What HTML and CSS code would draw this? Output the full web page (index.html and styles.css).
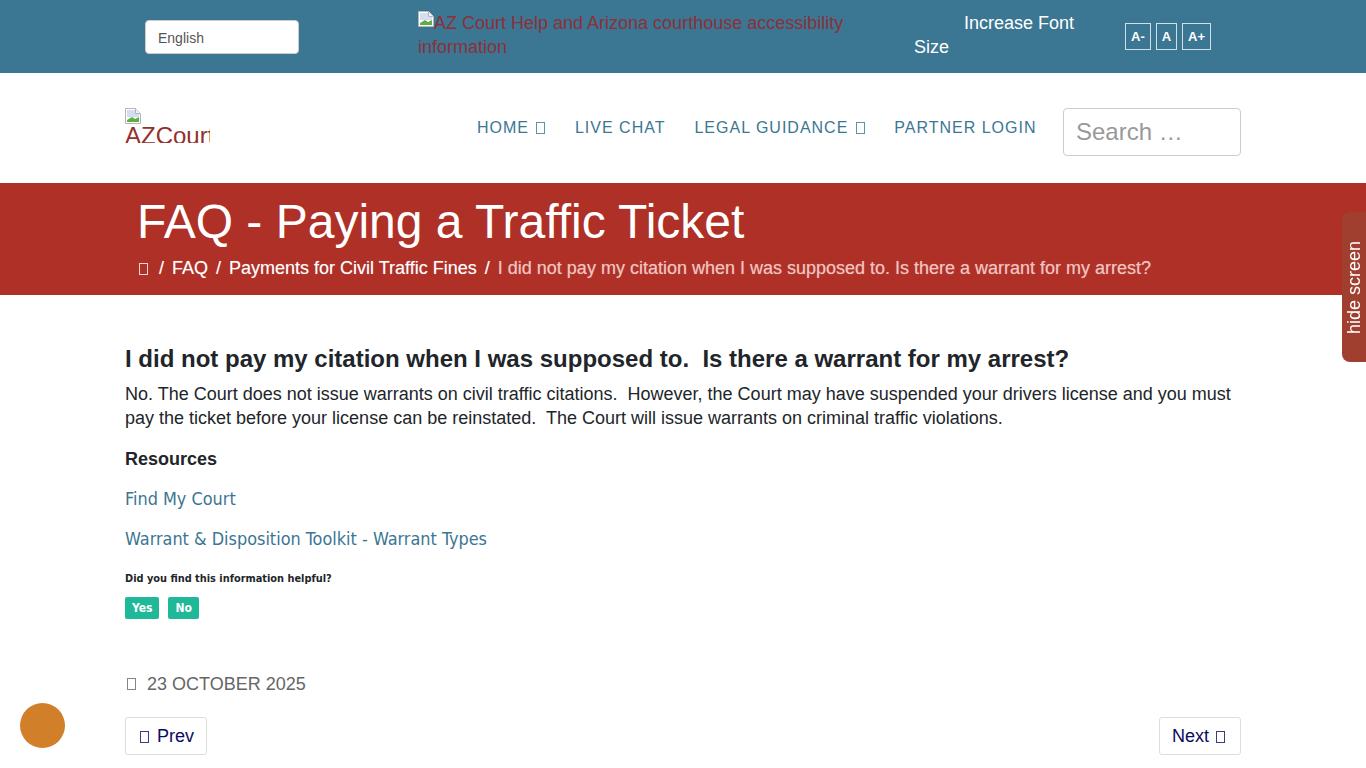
FILE: index.html
```html
<!DOCTYPE html>
<html lang="en">

<head>
    <meta charset="UTF-8">
    <meta name="viewport" content="width=device-width, initial-scale=1.0">
    <title>FAQ - Paying a Traffic Ticket</title>
    <link rel="stylesheet" href="styles.css">
</head>

<body>
    <div class="topbar">
        <div class="container topbar-row">
            <div class="lang-col">
                <div class="lang-select">English</div>
            </div>
            <a class="help-link" href="#">
                <svg class="broken-img" width="16" height="16" viewBox="0 0 16 16">
                    <path d="M.5.5h10l5 5v10H.5z" fill="#fff" stroke="#b5b5b5" />
                    <path d="M2 2h8v4h4v3H2z" fill="#d3def5" />
                    <path d="M2 14v-2l5-3 3 2 4-2v5z" fill="#5fae44" />
                    <path d="M10.500.5v5h5" fill="#f2f2f2" stroke="#b5b5b5" />
                </svg>AZ Court Help and Arizona courthouse accessibility information
            </a>
            <div class="font-label">Increase Font Size</div>
            <div class="font-btns">
                <a class="font-btn" href="#">A-</a>
                <a class="font-btn" href="#">A</a>
                <a class="font-btn" href="#">A+</a>
            </div>
        </div>
    </div>

    <header class="container site-header">
        <a class="logo" href="#">
            <svg class="broken-img" width="16" height="16" viewBox="0 0 16 16">
                <path d="M.5.5h10l5 5v10H.5z" fill="#fff" stroke="#b5b5b5" />
                <path d="M2 2h8v4h4v3H2z" fill="#d3def5" />
                <path d="M2 14v-2l5-3 3 2 4-2v5z" fill="#5fae44" />
                <path d="M10.500.5v5h5" fill="#f2f2f2" stroke="#b5b5b5" />
            </svg>
            <span class="logo-alt">AZCourtHelp</span>
        </a>
        <nav class="main-nav">
            <a href="#">Home <i class="tofu"></i></a>
            <a href="#">Live Chat</a>
            <a href="#">Legal Guidance <i class="tofu"></i></a>
            <a href="#">Partner Login</a>
        </nav>
        <input class="search" type="text" placeholder="Search …">
    </header>

    <section class="banner">
        <div class="container banner-inner">
            <h1>FAQ - Paying a Traffic Ticket</h1>
            <ol class="breadcrumb">
                <li><a href="#"><i class="tofu"></i></a></li>
                <li><a href="#">FAQ</a></li>
                <li><a href="#">Payments for Civil Traffic Fines</a></li>
                <li class="current">I did not pay my citation when I was supposed to. Is there a warrant for my arrest?</li>
            </ol>
        </div>
    </section>

    <main class="container article">
        <h2>I did not pay my citation when I was supposed to.&nbsp; Is there a warrant for my arrest?</h2>
        <p class="answer">No. The Court does not issue warrants on civil traffic citations.&nbsp; However, the Court may have suspended your drivers license and you must pay the ticket before your license can be reinstated.&nbsp; The Court will issue warrants on criminal traffic violations.</p>
        <p class="resources"><strong>Resources</strong></p>
        <p class="resource-link"><a href="#">Find My Court</a></p>
        <p class="resource-link"><a href="#">Warrant &amp; Disposition Toolkit - Warrant Types</a></p>

        <div class="helpful">
            <div class="helpful-q">Did you find this information helpful?</div>
            <div class="helpful-btns">
                <button class="vote">Yes</button>
                <button class="vote">No</button>
            </div>
        </div>

        <div class="published"><i class="tofu"></i><span>23 October 2025</span></div>

        <div class="pager">
            <a class="page-btn" href="#"><i class="tofu"></i> Prev</a>
            <a class="page-btn" href="#">Next <i class="tofu"></i></a>
        </div>
    </main>

    <a class="hide-tab" href="#">hide screen</a>
    <div class="chat-dot"></div>
</body>

</html>
```

FILE: styles.css
```css
* {
    box-sizing: border-box;
}

body {
    font-family: "Liberation Sans", Arial, sans-serif;
    font-size: 18px;
    line-height: 24px;
    color: #212529;
    background-color: #fff;
    margin: 0;
}

a {
    text-decoration: none;
}

.container {
    width: 1116px;
    margin: 0 auto;
}

.tofu {
    display: inline-block;
    width: 9px;
    height: 12px;
    border: 1px solid currentColor;
    opacity: .8;
}

.broken-img {
    vertical-align: top;
}

/* top bar */
.topbar {
    background-color: #3b7693;
    height: 73px;
}

.topbar-row {
    display: flex;
    height: 73px;
}

.lang-col {
    width: 293px;
    padding: 20px 0 0 20px;
}

.lang-select {
    width: 154px;
    height: 34px;
    padding: 5px 12px;
    font-size: 14px;
    color: #555;
    background-color: #fff;
    border: 1px solid #ccc;
    border-radius: 4px;
}

.help-link {
    width: 470px;
    padding-top: 11px;
    color: #8d3038;
}

.font-label {
    width: 197px;
    margin-left: 26px;
    padding: 11px 20px 0 0;
    color: #fff;
    text-indent: 50px;
}

.font-btns {
    display: flex;
    gap: 5px;
    padding-top: 23px;
    margin-left: 14px;
}

.font-btn {
    height: 27px;
    padding: 0 5px;
    font-size: 13px;
    font-weight: bold;
    line-height: 25px;
    color: #fff;
    border: 1px solid #cfe0e8;
}

/* header */
.site-header {
    display: flex;
    align-items: flex-start;
    height: 110px;
}

.logo {
    width: 85px;
    height: 35px;
    margin-top: 35px;
    overflow: hidden;
    color: #93302e;
    font-size: 24px;
    line-height: 24px;
    white-space: nowrap;
}

.logo .broken-img {
    display: block;
}

.logo-alt {
    display: block;
}

.main-nav {
    display: flex;
    gap: 29px;
    margin-left: 267px;
    padding-top: 43px;
}

.main-nav a {
    font-size: 16px;
    letter-spacing: 1px;
    text-transform: uppercase;
    color: #3b7693;
}

.main-nav .tofu {
    margin: 0 .500px 0 2px;
    vertical-align: -1px;
}

.search {
    width: 178px;
    height: 48px;
    margin: 35px 0 0 auto;
    padding: 6px 12px;
    font-family: inherit;
    font-size: 24px;
    border: 1px solid #ccc;
    border-radius: 4px;
}

.search::placeholder {
    color: #999;
}

/* banner */
.banner {
    background-color: #ae3027;
    height: 112px;
    color: #fff;
}

.banner-inner {
    padding: 13px 12px 0;
}

.banner h1 {
    margin: 0;
    font-size: 48px;
    font-weight: normal;
    line-height: 52px;
}

.breadcrumb {
    display: flex;
    margin: 8px 0 0;
    padding: 0;
    list-style: none;
    text-shadow: 0 0 1px rgba(255, 255, 255, .4);
}

.breadcrumb li + li::before {
    content: "/";
    padding: 0 8px;
}

.breadcrumb a {
    color: #fff;
}

.breadcrumb .tofu {
    margin: 0 3px 0 2px;
    vertical-align: -1px;
}

.breadcrumb .current {
    color: #f2c4bf;
}

.breadcrumb .current::before {
    color: #fff;
}

/* article */
.article {
    padding-top: 50px;
}

.article h2 {
    margin: 0 0 9px;
    font-size: 24px;
    line-height: 28px;
}

.answer {
    margin: 0 0 17px;
}

.resources {
    margin: 0 0 16px;
}

.resource-link {
    margin: 0 0 16px;
}

.resource-link a {
    font-family: "DejaVu Sans", sans-serif;
    font-stretch: condensed;
    font-size: 17.900px;
    color: #3b7693;
}

.helpful {
    margin-top: 20px;
}

.helpful-q {
    font-family: "DejaVu Sans", sans-serif;
    font-stretch: condensed;
    font-size: 10.900px;
    font-weight: bold;
    line-height: 16px;
}

.helpful-btns {
    display: flex;
    gap: 9px;
    margin-top: 10px;
}

.vote {
    height: 22px;
    padding: 0 7px;
    font-family: "DejaVu Sans", sans-serif;
    font-stretch: condensed;
    font-size: 12px;
    font-weight: bold;
    color: #fff;
    background-color: #1fb99a;
    border: 0;
    border-radius: 2px;
}

.published {
    display: flex;
    align-items: center;
    gap: 11px;
    margin-top: 53px;
    padding-left: 2px;
    color: #666;
    text-transform: uppercase;
}

.pager {
    display: flex;
    justify-content: space-between;
    margin-top: 21px;
}

.page-btn {
    height: 38px;
    padding: 6px 12px;
    color: #0b0b61;
    border: 1px solid #ddd;
    border-radius: 3px;
}

.page-btn .tofu {
    margin: 0 3px 0 2px;
    vertical-align: -1px;
}

/* floating bits */
.hide-tab {
    position: fixed;
    top: 212px;
    right: 0;
    width: 24px;
    height: 150px;
    padding-top: 28px;
    writing-mode: vertical-rl;
    transform: rotate(180deg);
    line-height: 24px;
    color: #fff;
    background-color: #a03f30;
    border-radius: 0 8px 8px 0;
}

.chat-dot {
    position: fixed;
    left: 20px;
    top: 703px;
    width: 45px;
    height: 45px;
    background-color: #d17f28;
    border-radius: 50%;
}
```
